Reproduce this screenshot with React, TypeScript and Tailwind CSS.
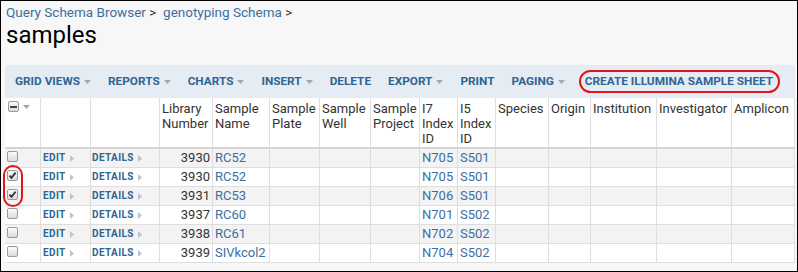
import React from 'react';

const cols = 'grid grid-cols-[36px_50px_69px_53px_57px_50px_51px_49px_38px_38px_53px_42px_66px_75px_63px]';

const headers = [
  '',
  '',
  '',
  'Library Number',
  'Sample Name',
  'Sample Plate',
  'Sample Well',
  'Sample Project',
  'I7 Index ID',
  'I5 Index ID',
  'Species',
  'Origin',
  'Institution',
  'Investigator',
  'Amplicon',
];

const rows = [
  { num: '3930', name: 'RC52', i7: 'N705', i5: 'S501', checked: false },
  { num: '3930', name: 'RC52', i7: 'N705', i5: 'S501', checked: true },
  { num: '3931', name: 'RC53', i7: 'N706', i5: 'S501', checked: true },
  { num: '3937', name: 'RC60', i7: 'N701', i5: 'S502', checked: false },
  { num: '3938', name: 'RC61', i7: 'N702', i5: 'S502', checked: false },
  { num: '3939', name: 'SIVkcol2', i7: 'N704', i5: 'S502', checked: false },
];

const menu = [
  { label: 'GRID VIEWS', caret: true },
  { label: 'REPORTS', caret: true },
  { label: 'CHARTS', caret: true },
  { label: 'INSERT', caret: true },
  { label: 'DELETE', caret: false },
  { label: 'EXPORT', caret: true },
  { label: 'PRINT', caret: false },
  { label: 'PAGING', caret: true },
];

const Caret = () => (
  <svg width="7" height="4" viewBox="0 0 7 4" className="ml-[4px] shrink-0">
    <path d="M0 0h7L3.5 4z" fill="#a3a8ad" />
  </svg>
);

const Arrow = () => (
  <svg width="4" height="7" viewBox="0 0 4 7" className="ml-[4px] shrink-0">
    <path d="M0 0l4 3.5L0 7z" fill="#bfc3c7" />
  </svg>
);

const Checkbox = ({ checked, minus }: { checked?: boolean; minus?: boolean }) => (
  <span className="flex h-[11px] w-[11px] items-center justify-center rounded-[2px] border border-[#9a9a9a] bg-gradient-to-b from-[#fbfbfb] to-[#dcdcdc]">
    {checked && (
      <svg width="9" height="9" viewBox="0 0 9 9">
        <path d="M1.5 4.6l2 2.2L7.6 1.6" fill="none" stroke="#333" strokeWidth="1.8" />
      </svg>
    )}
    {minus && <span className="h-[2px] w-[7px] bg-[#444]" />}
  </span>
);

const cell = 'border-r border-[#dedede]';

export default function App() {
  return (
    <div className="relative h-[272px] w-[798px] overflow-hidden border border-black bg-[#f7f7f7] font-['Roboto',sans-serif]">
      <div className="px-[5px] pt-[3px] text-[13.5px] leading-[16px]">
        <span className="text-[#3b6fa3]">Query Schema Browser</span>
        <span className="text-[#333]"> &gt;&nbsp;&nbsp;</span>
        <span className="text-[#3b6fa3]">genotyping Schema</span>
        <span className="text-[#333]"> &gt;</span>
      </div>
      <div className="mt-[1px] px-[5px] text-[24px] leading-[28px] text-black">samples</div>

      <div className="mx-[4px] mt-[16px] flex h-[33px] w-[790px] items-center gap-[17px] whitespace-nowrap bg-[#e5ecf3] pl-[10px] text-[11.8px] font-bold text-[#2f6592]">
        {menu.map((m) => (
          <span key={m.label} className="flex shrink-0 items-center">
            {m.label}
            {m.caret && <Caret />}
          </span>
        ))}
        <span className="-ml-[3px] flex h-[23px] shrink-0 items-center rounded-[12px] border-2 border-[#e3141b] pl-[4px] pr-[5px]">
          CREATE ILLUMINA SAMPLE SHEET
        </span>
      </div>

      <div className="mx-[4px] w-[790px] bg-white text-[13px] text-[#333]">
        <div className={`${cols} h-[51px] border-b-2 border-[#d4d4d4] leading-[15px]`}>
          {headers.map((h, i) => (
            <div key={i} className={`${cell} px-[2px] pt-[3px]`}>
              {i === 0 ? (
                <span className="flex items-center pl-[1px]">
                  <Checkbox minus />
                  <Caret />
                </span>
              ) : (
                h.split(' ').map((w, j) => <div key={j}>{w}</div>)
              )}
            </div>
          ))}
        </div>
        {rows.map((r, i) => (
          <div
            key={i}
            className={`${cols} h-[19px] border-b border-[#dedede] leading-[18px] ${i % 2 === 0 ? 'bg-[#f3f3f3]' : 'bg-white'}`}
          >
            <div className={`${cell} pl-[2px] pt-[2px]`}>
              <Checkbox checked={r.checked} />
            </div>
            <div className={`${cell} flex items-center pl-[2px] text-[10px] font-bold tracking-[0.4px] text-[#2f6592]`}>
              EDIT
              <Arrow />
            </div>
            <div className={`${cell} flex items-center pl-[1px] text-[10px] font-bold tracking-[0.4px] text-[#2f6592]`}>
              DETAILS
              <Arrow />
            </div>
            <div className={`${cell} pr-[2px] text-right`}>{r.num}</div>
            <div className={`${cell} pl-[2px] text-[#3b6fa3]`}>{r.name}</div>
            <div className={cell} />
            <div className={cell} />
            <div className={cell} />
            <div className={`${cell} pl-[2px] text-[#3b6fa3]`}>{r.i7}</div>
            <div className={`${cell} pl-[2px] text-[#3b6fa3]`}>{r.i5}</div>
            <div className={cell} />
            <div className={cell} />
            <div className={cell} />
            <div className={cell} />
            <div className={cell} />
          </div>
        ))}
      </div>

      {/* annotation around selected rows */}
      <div className="absolute left-[2px] top-[164px] h-[42px] w-[20px] rounded-[10px] border-2 border-[#e3141b]" />
    </div>
  );
}
